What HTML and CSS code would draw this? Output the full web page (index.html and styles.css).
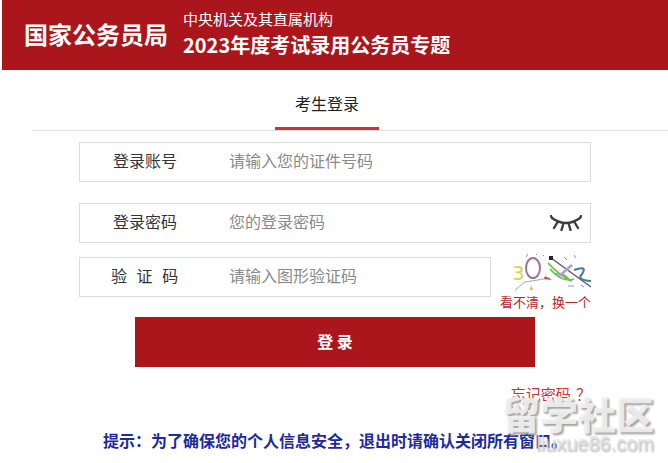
FILE: index.html
```html
<!DOCTYPE html>
<html>
<head>
    <title>2023年度考试录用公务员专题</title>
    <meta charset="UTF-8">
    <link rel="stylesheet" href="styles.css">
</head>
<body>

<div class="header">
    <div class="logo">国家公务员局</div>
    <div class="titles">
        <div class="subtitle">中央机关及其直属机构</div>
        <div class="title">2023年度考试录用公务员专题</div>
    </div>
</div>

<div class="tabs">
    <div class="tab">考生登录</div>
</div>

<div class="form">
    <div class="field">
        <label class="name">登录账号</label>
        <span class="hint">请输入您的证件号码</span>
    </div>
    <div class="field password">
        <label class="name">登录密码</label>
        <span class="hint">您的登录密码</span>
        <svg class="eye" width="32" height="16" viewBox="0 0 32 16">
            <path d="M2 3 Q16 13 30 3 M7 8 L4 13 M13 10 L11.500 15 M19 10 L20.500 15 M25 8 L28 13 M2 3 L1 1 M30 3 L31 1" fill="none" stroke="#3d3d3d" stroke-width="2.400" stroke-linecap="round"/>
        </svg>
    </div>
    <div class="captcha-row">
        <div class="field captcha">
            <label class="name spaced">验 证 码</label>
            <span class="hint">请输入图形验证码</span>
        </div>
        <div class="captcha-box">
            <svg class="captcha-img" width="80" height="43" viewBox="0 0 80 43">
                <text x="0" y="28" class="c3">3</text>
                <ellipse cx="21" cy="16" rx="7" ry="10" fill="none" stroke="#a0709f" stroke-width="2"/>
                <path d="M36 11 Q48 24 60 29 M38 17 Q50 31 62 27 M43 22 Q52 20 58 29" fill="none" stroke="#69c04c" stroke-width="1.800"/>
                <path d="M39 6 L79 35" stroke="#555a6a" stroke-width="1.300"/>
                <rect x="37" y="4" width="4" height="4" fill="#23233a"/>
                <path d="M46 25 L60 13" stroke="#b79adf" stroke-width="2.500"/>
                <path d="M62 18 Q76 13 70 22 Q64 28 79 29" fill="none" stroke="#4c7aa8" stroke-width="2.200"/>
                <path d="M3 38 L13 30 L38 26" fill="none" stroke="#8fb5a8"/>
                <path d="M33 24 L40 28 L32 27 Z" fill="#e23a55"/>
                <path d="M18 38 L19 33 L21 38 Z" fill="#e0b93c"/>
                <path d="M14 5 L16 2 M24 2 L25 3 M31 3 L32 4 M52 5 L55 8 M62 3 L64 6 M56 34 L62 34 M69 33 L72 35" stroke="#7c9cb5"/>
            </svg>
            <a class="refresh">看不清，换一个</a>
        </div>
    </div>
    <div class="submit">登 录</div>
    <div class="forgot"><a>忘记密码 ？</a></div>
</div>

<div class="tip">提示：为了确保您的个人信息安全，退出时请确认关闭所有窗口。</div>

<div class="watermark">
    <div class="wm-big">留学社区</div>
    <div class="wm-small">liuxue86.com</div>
</div>

</body>
</html>
```

FILE: styles.css
```css
html {
    box-sizing: border-box;
}
*, *:before, *:after {
    box-sizing: inherit;
}

body{
    margin: 0;
    height: 463px;
    overflow: hidden;
    position: relative;
    background-color: white;
    font-family: "Noto Sans CJK SC", "Liberation Sans", sans-serif;
    font-size: 16px;
}

.header{
    margin-left: 2px;
    height: 70px;
    background-color: #aa161c;
    color: white;
    display: flex;
    align-items: center;
    padding-left: 22px;
}

.logo{
    font-size: 24px;
    font-weight: 700;
    line-height: 30px;
    width: 159px;
    margin-top: -2px;
}

.subtitle{
    font-size: 15px;
    line-height: 20px;
    margin-top: -3px;
}

.title{
    font-size: 20px;
    font-weight: 700;
    line-height: 28px;
    margin-top: 2px;
}

.tabs{
    margin-left: 32px;
    height: 61px;
    border-bottom: 1px solid #e2e2e2;
    padding-left: 243px;
}

.tab{
    width: 104px;
    height: 60px;
    line-height: 66px;
    text-align: center;
    color: #222;
    border-bottom: 3px solid #c9333b;
}

.form{
    width: 512px;
    margin-left: 79px;
    padding-top: 11px;
}

.field{
    height: 40px;
    border: 1px solid #dcdcdc;
    display: flex;
    align-items: center;
    margin-bottom: 21px;
    padding: 0 0 4px 33px;
}

.name{
    width: 116px;
    color: #333;
}

.spaced{
    margin-left: -2px;
    width: 118px;
    word-spacing: 6px;
}

.hint{
    color: #8a8a8a;
}

.password{
    margin-bottom: 14px;
    position: relative;
}

.eye{
    margin: 4px 8px 0 auto;
}

.captcha-row{
    display: flex;
    height: 60px;
}

.captcha{
    width: 412px;
    margin-bottom: 0;
}

.captcha-box{
    width: 100px;
    height: 60px;
    display: flex;
    flex-direction: column;
    align-items: flex-end;
    margin-top: -4px;
}

.captcha-img{
    display: block;
    flex: none;
    margin-top: -1px;
    margin-right: -1px;
}

.c3{
    font-family: "DejaVu Sans", sans-serif;
    font-size: 20px;
    fill: #d6d04e;
}

.refresh{
    font-size: 13px;
    line-height: 18px;
    color: #b5252c;
    white-space: nowrap;
    margin-top: -2px;
}

.submit{
    width: 400px;
    height: 50px;
    margin-left: 56px;
    background-color: #aa161c;
    color: white;
    font-weight: 700;
    line-height: 48px;
    text-align: center;
}

.forgot{
    margin-top: 17px;
    height: 20px;
    line-height: 20px;
    font-size: 15px;
    text-align: right;
    word-spacing: 2px;
    color: #c8333a;
}

.tip{
    margin-top: 24px;
    margin-left: 103px;
    line-height: 24px;
    font-weight: 700;
    color: #1c2a9e;
    white-space: nowrap;
}

.watermark{
    position: absolute;
    left: 502px;
    top: 392px;
    width: 152px;
    text-align: right;
    white-space: nowrap;
}

.wm-big{
    font-size: 38px;
    font-weight: 900;
    line-height: 42px;
    color: rgba(240, 240, 240, 0.92);
    text-shadow: 2px 2px 2px #a4a4a4;
}

.wm-small{
    font-family: "Liberation Sans", sans-serif;
    font-size: 20px;
    line-height: 18px;
    color: rgba(225, 225, 225, 0.8);
    text-shadow: 1px 2px 2px #b0b0b0;
}
```
